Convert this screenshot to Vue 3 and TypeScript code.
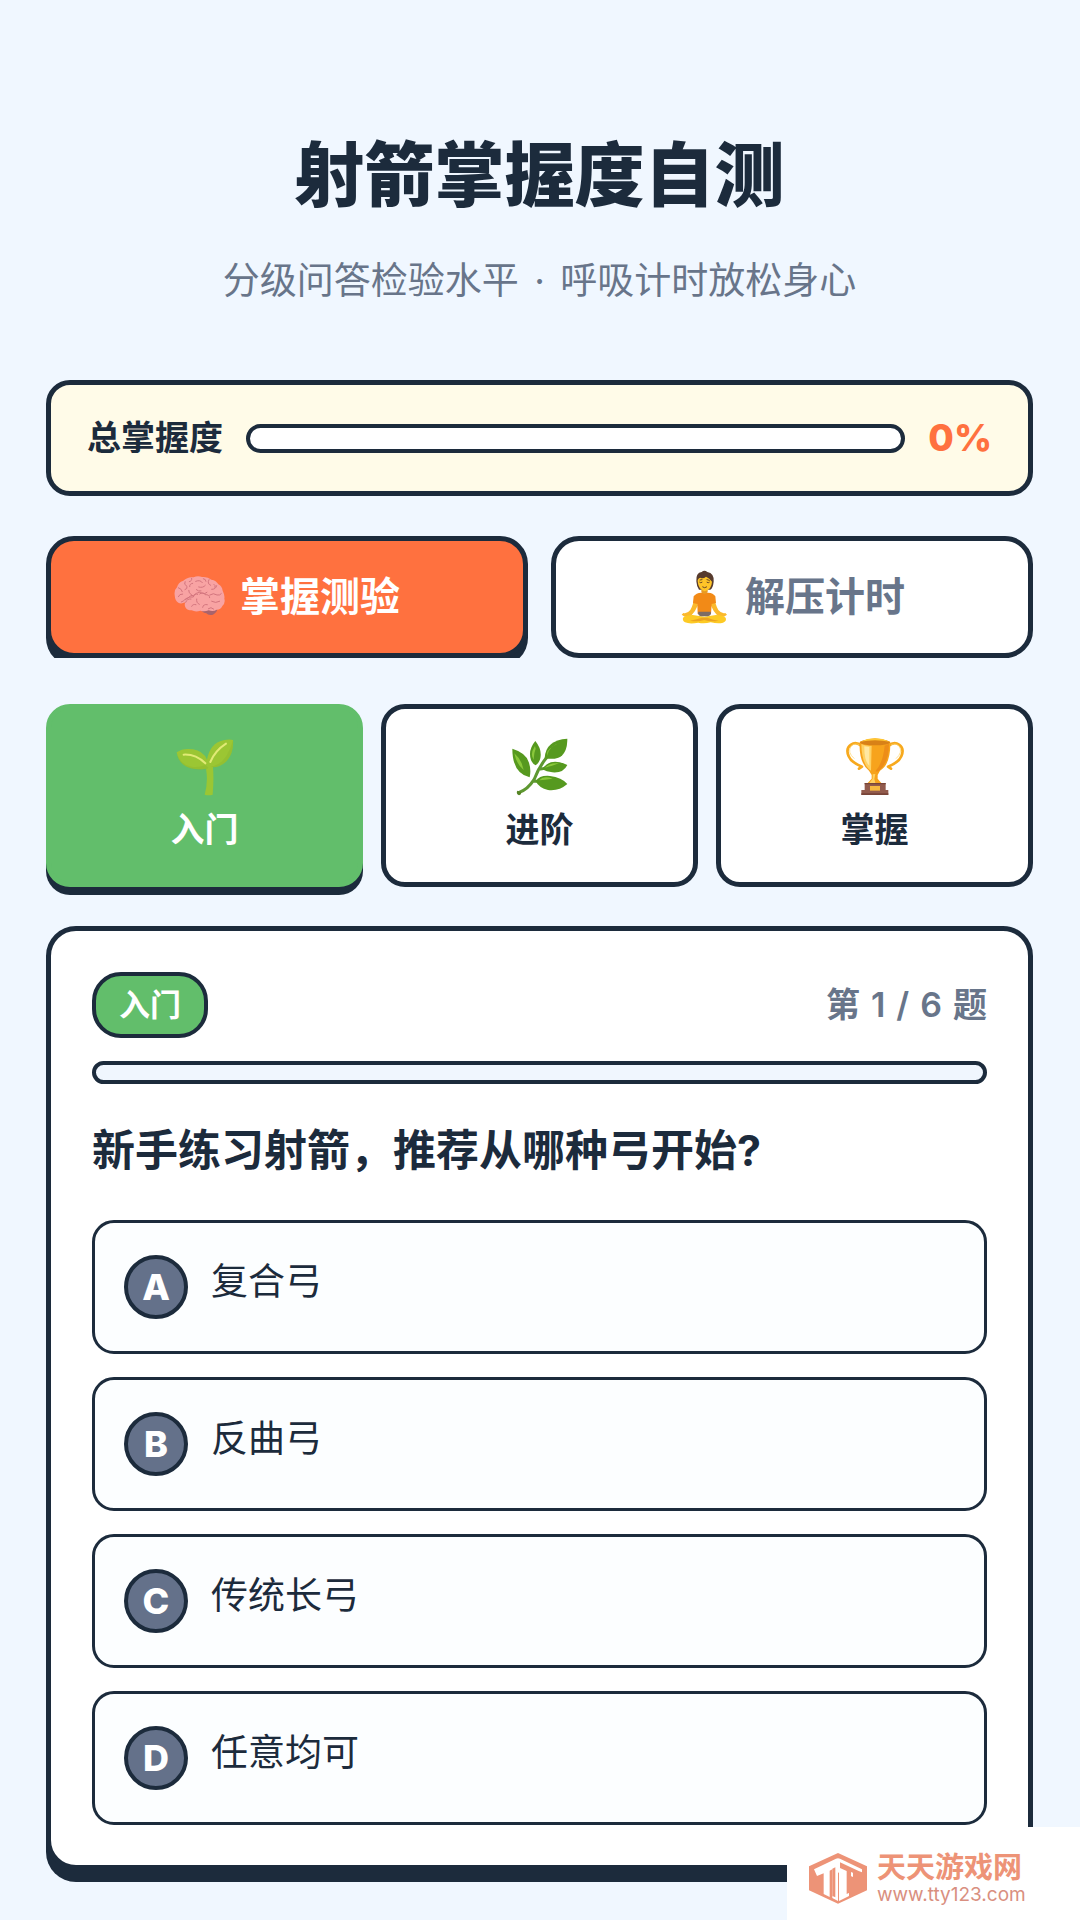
<script setup lang="ts">
import { ref } from 'vue'

type Level = { id: string; name: string }
type Option = { key: string; text: string }

const mastery = ref(0)
const mode = ref<'quiz' | 'relax'>('quiz')
const level = ref('basic')
const current = ref(1)
const total = 6
const progress = ref(0)

const levels: Level[] = [
  { id: 'basic', name: '入门' },
  { id: 'middle', name: '进阶' },
  { id: 'master', name: '掌握' },
]

const options: Option[] = [
  { key: 'A', text: '复合弓' },
  { key: 'B', text: '反曲弓' },
  { key: 'C', text: '传统长弓' },
  { key: 'D', text: '任意均可' },
]
</script>

<template>
  <div class="page">
    <header class="head">
      <h1>射箭掌握度自测</h1>
      <p>分级问答检验水平 <span class="dot">·</span> 呼吸计时放松身心</p>
    </header>

    <section class="mastery">
      <span class="mastery-label">总掌握度</span>
      <div class="bar" role="progressbar" aria-label="总掌握度" :aria-valuenow="mastery">
        <div class="bar-fill" :style="{ width: mastery + '%' }"></div>
      </div>
      <strong class="mastery-value">{{ mastery }}%</strong>
    </section>

    <nav class="tabs">
      <button type="button" class="tab" :class="{ active: mode === 'quiz' }" @click="mode = 'quiz'">
        <svg class="tab-icon" viewBox="45 35 153 153" aria-hidden="true">
          <path fill="#a8636c" d="M124 147q24-8 50 0q1 9-12 16q-14 4-20-4q-14-3-18-12z" />
          <path fill="#f8a3a3" d="M47 104q-2-15 7-23q3-15 19-20q14-13 31-10q12-6 25-1q17-2 28 8q15 2 21 14q11 5 13 19q7 14 5 24q4 13-6 22q-4 11-17 11q-10 7-24 2q-13 5-25 1q-14 5-26-1q-13 0-18-8q-5-8-1-16q-13 6-21 1q-10-5-11-23z" />
          <g fill="none" stroke="#d3757e" stroke-width="3" stroke-linecap="round">
            <path d="M58 82q10 3 12 12M71 101q-10-1-13 8M78 64q-5 9 6 14q2 8-6 10M98 54q2 8-7 10M101 69q-10 1-9 10M110 63q14-6 20 4M119 80q13 4 20-5M133 55q8 1 8 8M150 58q-7 12 5 17M158 87q12 1 15-11M80 126q4-12 16-10M99 105q-12-8-10-15M79 118q11-12 24-8q3-12 13-8M113 116q-2 12 8 16M122 101q10-8 16 2q14-1 14 9M152 104q12-8 22 0q9 2 13-4M158 123q12 7 24 0M131 141q2-11 14-8M98 138q3-8 13-5M148 145q8-7 16 1" />
            <path d="M67 125q8-2 13-10q10-1 15-9q10 2 17-7q9-6 18 0q8 3 14-3M112 88q6 6 14 4M165 72q6 3 3 9" />
          </g>
        </svg>
        <span>掌握测验</span>
      </button>
      <button type="button" class="tab" :class="{ active: mode === 'relax' }" @click="mode = 'relax'">
        <svg class="tab-icon" viewBox="420 604 153 153" overflow="visible" aria-hidden="true">
          <path fill="#fbb92c" d="M466 679q-3 24-12 39q-11 13-21 9l-5 5l9 6h17q15-14 23-35zM526 679q3 24 12 39q11 13 21 9l5 5l-9 6h-17q-15-14-23-35z" />
          <path fill="#fdca25" d="M432 741q10-8 29-8l35 5l35-5q19 0 29 8q4 10-8 15q-14 4-37-1q-20 5-37 1q-26 5-40-1q-8-5-6-14z" />
          <path fill="#eca320" d="M453 750q22-4 36-9h16q18 7 34 9q-23 5-43-2q-20 7-43 2z" />
          <path fill="#f28a17" d="M487 666h20q16 1 22 11l2 20l-13 3l-2 30h-40l-1-30l-13-3l2-20q7-10 23-11z" />
          <path fill="#7d6c65" d="M478 723h37q4 9-8 14h-22q-10-5-7-14z" />
          <path fill="#e99a24" d="M487 656h19v9q-10 10-19 0z" />
          <path fill="#573b2e" d="M472 632q-2-26 16-28q8-7 17 0q21 3 19 29q-2 19-10 24h-34q-7-9-8-25z" />
          <path fill="#ffc528" d="M476 632q-1-8 8-11q8 5 17-3q11 4 18 15q-1 24-22 29q-19-5-21-30z" />
          <path fill="none" stroke="#694827" stroke-width="3" stroke-linecap="round" d="M482 635q3 3 7 0M504 635q4 3 7 0M491 649q6 5 12 0M483 628l6-1M504 627l7 2" />
        </svg>
        <span>解压计时</span>
      </button>
    </nav>

    <div class="levels">
      <button
        v-for="item in levels"
        :key="item.id"
        type="button"
        class="level"
        :class="{ active: level === item.id }"
        @click="level = item.id"
      >
        <svg v-if="item.id === 'basic'" class="level-icon" viewBox="435 146 174 174" aria-hidden="true">
          <path fill="#9bc633" d="M437 189q19-14 49-9q30 4 42 31q9-49 49-58q18-5 29-1q3 37-18 62q-19 20-42 20q3 35-1 82q-12 3-24 0q11-39 4-78q-36 6-61-7q-23-14-27-42z" />
          <path fill="#7eab2d" opacity=".25" d="M438 193q12 34 42 39q25 4 43-6l9 9l-4 4q-36 6-61-7q-25-13-29-39zM606 154q2 37-18 60q-19 19-41 20l-7-3q43-3 66-77z" />
          <path fill="none" stroke="#e1ea75" stroke-width="6" stroke-linecap="round" d="M458 196q36-2 65 26M538 218q14-34 47-55" />
        </svg>
        <svg v-else-if="item.id === 'middle'" class="level-icon" viewBox="421 144 174 174" aria-hidden="true">
          <path fill="none" stroke="#5e9831" stroke-width="9" stroke-linecap="round" d="M444 308q27-9 46-39q15-39 37-65M504 238q10-1 17-3M489 274h18" />
          <g fill="#56991f">
            <path d="M425 176q43 13 50 42q7 22 2 44q-52-12-52-86z" />
            <path d="M494 153q18 22 16 45q-1 18-15 28q-17-9-17-34q0-20 16-39z" />
            <path d="M590 146q0 46-27 57q-17 6-41 2q2-55 68-59z" />
            <path d="M590 225q-12 25-45 22q-18-2-30-9q23-38 75-13z" />
            <path d="M590 282q-25 22-58 18q-26-5-37-26q12-19 43-16q35 4 52 24z" />
          </g>
          <path fill="#8ac83a" d="M431 190q14 12 22 30l6 20q-22-18-28-50zM493 168l2 8q-7 18-5 34q-14-16 3-42zM572 158q-29 8-42 27l-1 13q6-33 43-40zM565 220l-23 8q-16 4-20 6q14-17 43-14zM506 271q13-15 40-5q-24 3-40 5z" />
          <path fill="#568425" d="M440 302q-5 8 5 14q8-2 6-10z" />
        </svg>
        <svg v-else class="level-icon" viewBox="434 146 174 174" aria-hidden="true">
          <g fill="none" stroke="#f7a91d" stroke-width="8" stroke-linecap="round" stroke-linejoin="round">
            <path d="M481 170q-17-15-32-4q-17 11-7 35q7 18 40 31l-9 6M561 170q17-15 32-4q17 11 7 35q-7 18-40 31l9 6" />
          </g>
          <path fill="none" stroke="#ffd364" stroke-width="2" d="M475 167q-15-8-26 4q-12 18 10 37M568 167q17-8 26 4q11 18-10 37" />
          <path fill="#f7a31c" d="M475 158q46-22 92 0q1 68-31 86l-7 13v11l11 13h-41l12-13v-11l-8-13q-31-24-28-86z" />
          <path fill="#ffd162" d="M480 164q15 7 31 5l-2 75q-28-17-29-80zM514 255l8-1l-3 15l3 12h-18l10-13z" />
          <path fill="#ffe8a2" d="M489 171l15 2v56q-16-14-15-58z" />
          <path fill="#ed8d18" d="M550 169l13-6q0 57-31 83q-5 1-10 0q23-25 28-77z" />
          <ellipse cx="521" cy="159" rx="45" ry="9" fill="#d88117" />
          <path fill="#ffc633" d="M476 157q45-20 90 0q-45-9-90 0z" />
          <path fill="#925b4d" d="M490 281h63v22h-63zM480 302h81v14h-81z" />
          <path fill="#784438" d="M490 281h63v4h-63zM480 312h81v5h-81z" />
          <path fill="#f6b840" d="M506 290h30v14h-30z" />
        </svg>
        <span>{{ item.name }}</span>
      </button>
    </div>

    <main class="quiz">
      <div class="quiz-head">
        <span class="badge">入门</span>
        <span class="count">
          <span>第</span>
          <span>{{ current }}</span>
          <span>/</span>
          <span>{{ total }}</span>
          <span>题</span>
        </span>
      </div>
      <div class="bar thin" role="progressbar" aria-label="答题进度" :aria-valuenow="progress">
        <div class="bar-fill" :style="{ width: progress + '%' }"></div>
      </div>
      <h2>新手练习射箭，推荐从哪种弓开始?</h2>
      <div class="options">
        <button v-for="option in options" :key="option.key" type="button" class="option">
          <span class="key">{{ option.key }}</span>
          <span class="option-text">{{ option.text }}</span>
        </button>
      </div>
    </main>

    <aside class="mark">
      <svg class="mark-logo" viewBox="117 160 174 153" aria-hidden="true">
        <path fill="#ed9377" d="M204 160l87 40v72l-87 40l-87-40v-72z" />
        <path fill="#fff" d="M132 209l66-32q6-2 12 0l66 32v9l-10-4l-56-26v13l39 17v14l-12-5v62l-30 15v-84l-3-2v86l-17-9v-86l-8 4v79l-18-9v-62l-20 8z" />
        <path fill="#ed9377" d="M187 207l9-4v90l-9-4zM210 194l56 24v8l-23-9v60l-13 6v-69l-20-9z" />
      </svg>
      <div class="mark-text">
        <span class="mark-name">天天游戏网</span>
        <span class="mark-url">www.tty123.com</span>
      </div>
    </aside>
  </div>
</template>

<style>
body {
  margin: 0;
  background: #f0f7ff;
}
</style>

<style scoped>
.page {
  --ink: #1c2b3c;
  --muted: #68758a;
  --green: #62be6b;
  --orange: #ff713f;
  position: relative;
  box-sizing: border-box;
  min-height: 100vh;
  padding: 130px 47px 39px 46px;
  background: #f0f7ff;
  color: var(--ink);
  font-family: Inter, "Noto Sans CJK SC", sans-serif;
}

.page * {
  box-sizing: border-box;
}

button {
  margin: 0;
  font: inherit;
  color: inherit;
  cursor: pointer;
}

.head {
  text-align: center;
}

h1 {
  margin: 0;
  font-size: 70px;
  font-weight: 800;
  line-height: 92px;
}

.head p {
  margin: 34px 0 0;
  color: var(--muted);
  font-size: 37px;
  line-height: 50px;
}

.dot {
  margin: 0 5px;
}

.mastery {
  display: flex;
  align-items: center;
  gap: 23px;
  height: 116px;
  margin-top: 74px;
  padding: 0 36px;
  border: 5px solid var(--ink);
  border-radius: 24px;
  background: #fffbe8;
}

.mastery-label {
  font-size: 34px;
  font-weight: 700;
  line-height: 50px;
}

.mastery-value {
  color: var(--orange);
  font-size: 37px;
  font-weight: 800;
  line-height: 50px;
}

.bar {
  flex: 1;
  height: 29px;
  border: 4px solid var(--ink);
  border-radius: 15px;
  background: #fff;
  overflow: hidden;
}

.bar-fill {
  height: 100%;
  background: var(--green);
}

.tabs {
  display: flex;
  gap: 23px;
  margin-top: 40px;
  overflow: hidden;
}

.tab {
  display: flex;
  flex: 1;
  align-items: center;
  justify-content: center;
  gap: 15px;
  height: 122px;
  padding: 0;
  border: 5px solid var(--ink);
  border-radius: 28px;
  background: #fff;
  color: var(--muted);
  font-size: 40px;
  font-weight: 700;
  line-height: 50px;
}

.tab.active {
  background: var(--orange);
  color: #fff;
  box-shadow: 0 8px 0 var(--ink);
}

.tab-icon {
  width: 51px;
  height: 51px;
}

.levels {
  display: grid;
  grid-template-columns: repeat(3, 1fr);
  gap: 18px;
  margin-top: 46px;
}

.level {
  display: flex;
  flex-direction: column;
  align-items: center;
  height: 183px;
  padding: 29px 0 0;
  border: 5px solid var(--ink);
  border-radius: 24px;
  background: #fff;
  font-size: 34px;
  font-weight: 700;
  line-height: 50px;
}

.level.active {
  border-color: var(--green);
  background: var(--green);
  color: #fff;
  box-shadow: 0 8px 0 var(--ink);
}

.level-icon {
  width: 58px;
  height: 58px;
  margin-bottom: 9px;
}

.quiz {
  margin-top: 39px;
  padding: 41px 41px 40px;
  border: 5px solid var(--ink);
  border-radius: 30px;
  background: #fff;
  box-shadow: 0 12px 0 var(--ink);
}

.quiz-head {
  display: flex;
  align-items: center;
  justify-content: space-between;
}

.badge {
  padding: 0 23px;
  border: 4px solid var(--ink);
  border-radius: 29px;
  background: var(--green);
  color: #fff;
  font-size: 31px;
  font-weight: 700;
  line-height: 58px;
}

.count {
  display: flex;
  gap: 11px;
  color: var(--muted);
  font-size: 34px;
  font-weight: 600;
  line-height: 50px;
}

.bar.thin {
  height: 23px;
  margin-top: 23px;
  background: #f0f6fe;
}

h2 {
  margin: 36px 0 0;
  font-size: 43px;
  font-weight: 700;
  line-height: 60px;
}

.options {
  display: flex;
  flex-direction: column;
  gap: 23px;
  margin-top: 40px;
}

.option {
  display: flex;
  align-items: center;
  gap: 23px;
  height: 134px;
  padding: 0 29px;
  border: 3px solid var(--ink);
  border-radius: 22px;
  background: #fcfeff;
  text-align: left;
}

.key {
  width: 64px;
  border: 4px solid var(--ink);
  border-radius: 50%;
  background: #64718a;
  color: #fff;
  font-size: 36px;
  font-weight: 800;
  line-height: 56px;
  text-align: center;
}

.option-text {
  padding-bottom: 11px;
  font-size: 37px;
  line-height: 50px;
}

.mark {
  position: absolute;
  right: 0;
  bottom: 0;
  display: flex;
  align-items: center;
  gap: 10px;
  width: 293px;
  height: 93px;
  padding: 10px 0 0 22px;
  background: #fff;
  color: #ed9377;
}

.mark-logo {
  width: 58px;
  height: 51px;
}

.mark-text {
  display: flex;
  flex-direction: column;
  padding-top: 2px;
}

.mark-name {
  font-size: 29px;
  font-weight: 700;
  line-height: 30px;
}

.mark-url {
  color: #d98f80;
  font-size: 19px;
  line-height: 24px;
}
</style>
